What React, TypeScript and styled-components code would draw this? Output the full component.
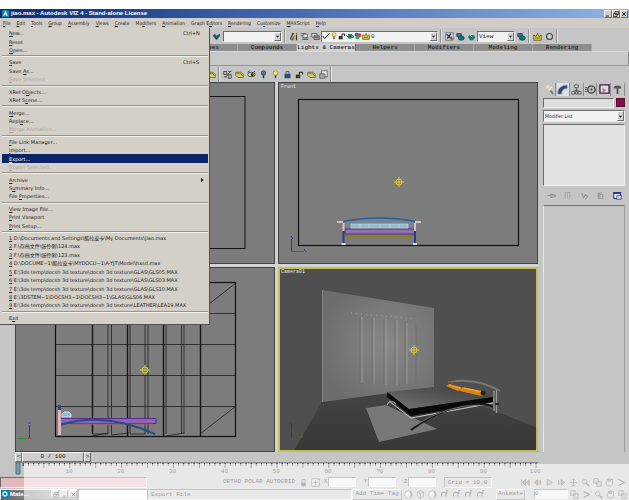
import React from "react";
import styled, { createGlobalStyle, css } from "styled-components";

const GlobalStyle = createGlobalStyle`
  * { box-sizing: border-box; }
  body { margin: 0; background: #fff; }
  button, input, select { font: inherit; color: inherit; margin: 0; padding: 0; border: 0; border-radius: 0; background: none; }
`;

const caption = `"Liberation Sans", sans-serif`;
const ui = `"DejaVu Sans Condensed", "Liberation Sans", sans-serif`;
const wide = `"DejaVu Sans", "Noto Sans CJK SC", sans-serif`;
const mono = `"Liberation Mono", monospace`;

const raised = css`
  border: 1px solid;
  border-color: #f4f4f4 #6c6c6c #6c6c6c #f4f4f4;
`;
const sunken = css`
  border: 1px solid;
  border-color: #6c6c6c #f0f0f0 #f0f0f0 #6c6c6c;
`;

const Page = styled.div`
  padding-top: 9px;
  font: 5px/8px ${ui};
  color: #1c1c1c;
`;
const Window = styled.main`
  position: relative;
  background: #c5c5c5;
`;
const TitleBar = styled.header`
  display: flex;
  align-items: center;
  gap: 2px;
  height: 9px;
  padding: 0 1px 0 2px;
  background: linear-gradient(90deg, #0b2a72, #4468ae 45%, #8fb4e6);
`;
const Title = styled.h1`
  flex: 1;
  margin: 0;
  font: bold 6px/9px ${caption};
  color: #fff;
`;
const WindowButtons = styled.div`
  display: flex;
`;
const WindowButton = styled.button`
  ${raised}
  display: grid;
  place-items: center;
  width: 8px;
  height: 8px;
  background: #d4d0c8;
`;
const MenuBar = styled.nav`
  display: flex;
  align-items: center;
  gap: 6px;
  height: 10px;
  padding-left: 3px;
  background: #d0cdc8;
`;
const MenuName = styled.button`
  white-space: nowrap;
  line-height: 10px;
`;
const Toolbar = styled.div<{ $start: number; $height: number }>`
  display: flex;
  align-items: center;
  height: ${(p) => p.$height}px;
  padding-left: ${(p) => p.$start}px;
`;
const ToolGroup = styled.div<{ $gap?: number }>`
  display: flex;
  align-items: center;
  gap: ${(p) => p.$gap ?? 2}px;
  height: 14px;
  padding: 0 2px 0 3px;
  border-right: 1px solid #909090;
  box-shadow: 1px 0 #e4e4e4;
`;
const ToolButton = styled.button<{ $on?: boolean }>`
  display: grid;
  place-items: center;
  width: 10px;
  height: 11px;
  flex: none;
  background: ${(p) => (p.$on ? "#dedede" : "none")};
`;
const ComboBox = styled.label<{ $width?: number; $height?: number }>`
  ${sunken}
  position: relative;
  display: flex;
  align-items: center;
  width: ${(p) => (p.$width ? `${p.$width}px` : "100%")};
  height: ${(p) => p.$height ?? 11}px;
  background: #f2f2f2;
`;
const ComboSelect = styled.select<{ $mono?: boolean }>`
  appearance: none;
  flex: 1;
  min-width: 0;
  height: 100%;
  padding: 0 8px 0 1px;
  outline: 0;
  font: ${(p) => (p.$mono ? `6px/9px ${mono}` : `5px/9px ${ui}`)};
`;
const ComboArrow = styled.span`
  ${raised}
  position: absolute;
  right: 0;
  top: 0;
  bottom: 0;
  width: 7px;
  display: grid;
  place-items: center;
  background: #d2d2d2;
  pointer-events: none;
`;
const TabStrip = styled.div`
  display: flex;
  height: 7px;
  padding-left: 179px;
`;
const Tab = styled.button<{ $active: boolean }>`
  flex: 0 0 59px;
  height: 7px;
  font: bold 6px/7px ${mono};
  white-space: nowrap;
  color: ${(p) => (p.$active ? "#3c3c3c" : "#303030")};
  background: ${(p) => (p.$active ? "#d2d2d2" : "#8e8e8e")};
  border-right: 1px solid ${(p) => (p.$active ? "#686868" : "#a6a6a6")};
`;
const TabPanel = styled.div`
  height: 15px;
  border: solid;
  border-width: 1px 1px 1px 0;
  border-color: #dadada #8a8a8a #969696;
  background: #c8c8c8;
`;
const Workspace = styled.div`
  display: grid;
  grid-template-columns: 15px minmax(0, 1fr) 91px;
`;
const Rail = styled.div`
  background: #c6c6c6;
`;
const Viewports = styled.div`
  display: grid;
  grid-template-columns: 1fr 1fr;
  gap: 3px;
  background: #d2d2d2;
`;
const View = styled.section`
  position: relative;
  background: #7c7c7c;
`;
const ViewLabel = styled.h2`
  position: absolute;
  left: 3px;
  top: 2px;
  margin: 0;
  font: 5px/6px ${mono};
  color: #e6e6e6;
`;
const Drawing = styled.svg`
  display: block;
  width: 100%;
  height: auto;
`;
const Ruler = styled(Drawing)`
  overflow: visible;
`;
const CommandPanel = styled.aside`
  display: flex;
  flex-direction: column;
  padding: 0 4px 0 5px;
  background: #c5c5c5;
`;
const PanelTabs = styled.div`
  display: flex;
  justify-content: space-between;
  height: 14px;
  align-items: center;
`;
const PanelTab = styled.button<{ $on?: boolean }>`
  display: grid;
  place-items: center;
  width: 13px;
  height: 13px;
  background: ${(p) => (p.$on ? "#e0e0e0" : "none")};
  border-right: 1px solid #8c8c8c;
`;
const NameRow = styled.div`
  display: flex;
  gap: 2px;
  height: 10px;
  margin: 2px 0;
`;
const NameInput = styled.input`
  ${sunken}
  flex: 1;
  min-width: 0;
  background: #dedede;
`;
const Swatch = styled.button`
  width: 9px;
  height: 9px;
  background: #850d48;
  border: 1px solid #5c0a35;
`;
const StackList = styled.div`
  ${sunken}
  height: 62px;
  margin: 2px 0;
  background: #e1e1e1;
`;
const StackTools = styled.div`
  display: flex;
  justify-content: space-between;
  align-items: center;
  height: 14px;
  padding: 0 3px;
`;
const Rollout = styled.div`
  flex: 1;
  margin-top: 3px;
  border: solid;
  border-width: 1px 1px 0;
  border-color: #6e6e6e #9a9a9a #9a9a9a #e6e6e6;
`;
const TimeSlider = styled.div`
  display: flex;
  height: 10px;
  padding-left: 15px;
`;
const SliderButton = styled.button<{ $wide?: boolean }>`
  ${raised}
  width: ${(p) => (p.$wide ? 62 : 7)}px;
  height: 10px;
  font: 6px/8px ${mono};
  background: #cdcdcd;
`;
const Footer = styled.footer`
  position: relative;
  color: #000;
`;
const Haze = styled.div`
  position: absolute;
  inset: 2px 0 0 24px;
  background: rgba(255, 255, 255, 0.6);
  pointer-events: none;
`;
const Track = styled.div`
  height: 14px;
  padding: 0 91px 0 15px;
`;
const StatusRow = styled.div`
  display: flex;
  align-items: center;
  height: 12px;
  font: 6px/10px ${mono};
  white-space: nowrap;
`;
const ScriptLine = styled.input<{ $tone: string; $width: number }>`
  ${sunken}
  flex: none;
  width: ${(p) => p.$width}px;
  height: 11px;
  background: ${(p) => p.$tone};
`;
const StatusText = styled.span<{ $width: number; $boxed?: boolean }>`
  flex: none;
  width: ${(p) => p.$width}px;
  height: 11px;
  padding-left: 3px;
  ${(p) => p.$boxed && sunken}
`;
const CoordLabel = styled.label`
  display: flex;
  align-items: center;
  gap: 1px;
  width: 40px;
`;
const CoordInput = styled.input<{ $width?: number }>`
  ${sunken}
  flex: none;
  width: ${(p) => p.$width ?? 28}px;
  height: 10px;
  background: #eee;
`;
const TextButton = styled.button<{ $width: number }>`
  ${raised}
  flex: none;
  width: ${(p) => p.$width}px;
  height: 11px;
  line-height: 8px;
`;
const TaskWindow = styled.div`
  ${raised}
  display: flex;
  align-items: center;
  gap: 1px;
  width: 78px;
  height: 11px;
  background: linear-gradient(90deg, #666, #bbb);
  color: #fff;
  font: bold 6px/9px ${caption};
`;
const TaskTitle = styled.span`
  flex: 1;
`;
const Spacer = styled.span<{ $grow?: number }>`
  flex: ${(p) => p.$grow ?? 1};
`;
const IconRun = styled.div<{ $gap?: number }>`
  display: flex;
  flex: none;
  gap: ${(p) => p.$gap ?? 2}px;
  padding: 0 2px 0 1px;
`;
const Menu = styled.ul`
  position: absolute;
  left: 0;
  top: 19px;
  z-index: 2;
  display: flex;
  flex-direction: column;
  width: 210px;
  min-height: 297px;
  margin: 0;
  padding: 1px 1px 2px 2px;
  list-style: none;
  background: #d4d0c8;
  font: 5px/8px ${wide};
  border: solid;
  border-width: 0 1px 1px 0;
  border-color: #55534f;
`;
const MenuLine = styled.li`
  flex: 1 0 8px;
  display: flex;
`;
const MenuItem = styled.button<{ $on?: boolean }>`
  display: flex;
  flex: 1;
  align-items: center;
  padding: 0 3px 0 7px;
  white-space: pre;
  text-align: left;
  line-height: 8px;
  background: ${(p) => (p.$on ? "#0a246a" : "none")};
  color: ${(p) => (p.$on ? "#fff" : "#1c1c1c")};
  &:disabled { color: #a9a59d; }
`;
const MenuLabel = styled.span`
  flex: 1;
`;
const Shortcut = styled.span`
  width: 22px;
`;
const Separator = styled.li`
  flex: none;
  height: 2px;
  margin: 1px 0;
  border-top: 1px solid #98948c;
  border-bottom: 1px solid #f0eee9;
`;

const icons: Record<string, React.ReactNode> = {
  pick: <><path d="M1 5l3-3 2 3 4-3 1 3-5 6z" fill="#236b78" /><path d="M3 5l3 4 3-4" stroke="#0c3440" fill="none" /></>,
  mirror: <><path d="M2 10L5 2l3 3M5 2h5v9M7 6L4 11" stroke="#333" fill="none" strokeWidth="1.5" /><circle cx="8" cy="3" r="2" fill="#e4d644" /><path d="M6 7h3v4H6z" fill="#c9b62b" /></>,
  align: <><path d="M1 2h7M1 5h7M3 8h8M3 10h8" stroke="#444" /><path d="M4 3h6v4H4z" fill="#eee" stroke="#555" /></>,
  layers: <><path d="M1 2h7v5H1z" fill="#ddd" stroke="#444" /><path d="M4 5h7v5H4z" fill="#aaa" stroke="#444" /><path d="M5 7h5" stroke="#333" /></>,
  check: <path d="M1 6l3 4 7-8" stroke="#222" fill="none" strokeWidth="1.5" />,
  bulb: <><circle cx="6" cy="4" r="3" fill="#f4ec68" stroke="#8c8420" /><path d="M5 7h2v4H5z" fill="#444" /></>,
  lock: <><path d="M1 6h6v5H1z" fill="#3c3a16" /><path d="M6 6V3h4v3" stroke="#222" fill="none" strokeWidth="1.5" /></>,
  teapot: <><ellipse cx="6" cy="7" rx="4" ry="3" fill="#198654" /><path d="M3 4h6M1 5l2 3M9 6q4-2 1 3" stroke="#155c57" fill="none" strokeWidth="1.5" /></>,
  balls: <><circle cx="4" cy="4" r="3" fill="#3155d2" /><circle cx="8" cy="5" r="3" fill="#d24141" /><circle cx="5" cy="8" r="3" fill="#32a75a" /></>,
  crown: <><path d="M1 4l3 2 2-4 2 4 3-2v7H1z" fill="#e0ce36" stroke="#504a19" /><path d="M3 8h6" stroke="#504a19" /></>,
  ring: <circle cx="6" cy="6" r="4" fill="#ccc" stroke="#444" strokeWidth="1.5" />,
  material: <><path d="M1 1h10v10H1z" fill="#ddd" stroke="#666" /><path d="M2 3l8 7M8 2L3 9" stroke="#27416e" strokeWidth="2" /><circle cx="8" cy="8" r="2" fill="#b44" /></>,
  render: <><path d="M1 2h6v4H1z" fill="#4671b4" stroke="#143860" /><ellipse cx="7" cy="8" rx="4" ry="3" fill="#17746b" stroke="#0d4440" /></>,
  quick: <><path d="M1 6l3-2h5l2 3-3 4H4z" fill="#187a70" /><path d="M4 4l3 3" stroke="#dff" /></>,
  stack: <><path d="M1 3h7l3 3v4H4L1 7z" fill="#dbd76c" stroke="#585520" /><path d="M2 5h6l2 3" stroke="#585520" fill="none" /></>,
  eye: <><ellipse cx="6" cy="6" rx="5" ry="3" fill="#eee58a" stroke="#222" /><circle cx="7" cy="6" r="2" fill="#222" /><path d="M1 3l3-2M9 2h2" stroke="#222" /></>,
  hide: <><path d="M1 2h4v4H1zM7 6h4v5H7z" fill="#bbb" stroke="#333" /><path d="M3 10l7-8M7 2h4M1 9h4" stroke="#333" /></>,
  bluebulb: <><circle cx="6" cy="4" r="3" fill="#55799e" stroke="#243c60" /><path d="M5 7h2v4H5z" fill="#333" /></>,
  bluelock: <><path d="M2 5h8v6H2z" fill="#294c80" /><path d="M4 5V2h4v3" stroke="#294c80" fill="none" /></>,
  graylock: <><path d="M3 6h6v5H3z" fill="#444" /><path d="M4 6V2h4v4" stroke="#444" fill="none" /></>,
  absolute: <><path d="M1 1h10v10H1z" fill="#ddd" stroke="#444" /><path d="M6 3v6M3 6h6" stroke="#333" /></>,
  sheet: <><path d="M3 1h8v8H3z" fill="#eee" stroke="#555" /><path d="M1 5h7v6H1z" fill="#aaa" stroke="#555" /></>,
  create: <><path d="M3 2l7 8M2 5l3-4M5 7l4-4" stroke="#eee8ba" strokeWidth="1.5" /><path d="M7 7l3 4" stroke="#777" strokeWidth="2" /></>,
  modify: <path d="M1 11V8q1-6 10-7v4Q5 5 5 11z" fill="#33456d" stroke="#8194bd" />,
  tree: <><path d="M6 3v3L2 9M6 6l4 3M6 6v4" stroke="#555" fill="none" /><path d="M4 1h4v3H4zM1 8h3v3H1zM5 8h2v3H5zM8 8h3v3H8z" fill="#ddd" stroke="#555" /></>,
  motion: <><circle cx="7" cy="6" r="4" fill="#bbb" stroke="#444" strokeWidth="1.5" /><circle cx="7" cy="6" r="1" fill="#333" /><path d="M0 4h3M0 6h2M0 8h3" stroke="#555" /></>,
  display: <><path d="M1 1h10v9H1z" fill="#ddd" stroke="#40233d" strokeWidth="1.5" /><path d="M4 4l4 3-4 2z" fill="#c06b8e" /></>,
  hammer: <><path d="M2 3q4-3 8 0v2H2z" fill="#545454" /><path d="M6 4v7" stroke="#545454" strokeWidth="2" /></>,
  pin: <path d="M1 6h4V4l3 1h3v3H8l-3 1V7" fill="#b2b2b2" stroke="#888" />,
  result: <path d="M3 2v8M6 2v8M9 2v8M2 2h8" stroke="#a0a0a0" fill="none" />,
  unique: <path d="M2 3l3 6 2-4 3 2-3 4" stroke="#939393" fill="none" strokeWidth="1.5" />,
  remove: <path d="M3 5h6v5H3zM2 4l6-2M5 6v3" stroke="#989898" fill="none" strokeWidth="1.5" />,
  config: <><path d="M1 2h9v8H1z" fill="#eee" stroke="#283890" strokeWidth="1.5" /><path d="M1 2h9v2H1z" fill="#283890" /><path d="M5 6h6v5H5z" fill="#d8dcf0" stroke="#283890" /></>,
  start: <path d="M1 2v8M6 2L2 6l4 4zM11 2L7 6l4 4z" stroke="#444" fill="#777" />,
  prev: <path d="M6 2L2 6l4 4zM8 3v6M10 3v6" stroke="#444" fill="#777" />,
  play: <path d="M3 2l7 4-7 4z" stroke="#444" fill="#aaa" />,
  next: <path d="M2 3v6M4 3v6M6 2l4 4-4 4z" stroke="#444" fill="#777" />,
  move: <path d="M6 1v10M1 6h10M4 3l2-2 2 2M4 9l2 2 2-2" stroke="#444" fill="none" />,
  zoom: <><circle cx="5" cy="5" r="3" stroke="#444" fill="none" /><path d="M7 7l4 4" stroke="#444" strokeWidth="2" /></>,
  extents: <path d="M1 1h6v6H1zM5 5h6v6H5z" stroke="#444" fill="#bbb" />,
  fov: <path d="M2 2l8 4-8 4" stroke="#444" fill="none" strokeWidth="1.5" />,
  hand: <path d="M3 10L1 6l2-1V2h2v3V1h2v4l1-3h2v7l-2 2z" stroke="#444" fill="#ccc" />,
  snap: <path d="M2 9V6q0-3 3-3t3 3v3M8 1h3M9 2v3" stroke="#444" fill="none" strokeWidth="1.5" />,
  cube: <path d="M2 3l4-2 4 2v6l-4 2-4-2zM2 3l4 2 4-2M6 5v6" stroke="#444" fill="#ddd" />,
  sphere: <><circle cx="6" cy="6" r="5" fill="#eee" stroke="#555" /><path d="M7 2a4 4 0 010 8q3-4 0-8" fill="#666" /></>,
  app: <><path d="M0 0h12v12H0z" fill="#1689aa" /><path d="M2 10L6 1l4 9H7L6 7l-2 3z" fill="#d8f8ff" /></>,
  task: <><path d="M0 0h12v12H0z" fill="#087ab0" /><circle cx="6" cy="6" r="3" fill="none" stroke="#d5f7ff" strokeWidth="2" /></>,
  min: <path d="M2 9h6v2H2z" fill="#222" />,
  restore: <path d="M4 1h7v6H4zM1 5h7v6H1z" fill="#d4d0c8" stroke="#222" strokeWidth="1.5" />,
  close: <path d="M2 2l8 8M10 2l-8 8" stroke="#222" strokeWidth="2" />,
  down: <path d="M2 4h8L6 9z" fill="#111" />,
  right: <path d="M4 2l5 4-5 4z" fill="#111" />,
};

const Icon = ({ name, size = 9 }: { name: string; size?: number }) => (
  <svg width={size} height={size} viewBox="0 0 12 12" aria-hidden="true">{icons[name]}</svg>
);
const Tool = ({ name, on }: { name: string; on?: boolean }) => (
  <ToolButton aria-label={name} $on={on}><Icon name={name} /></ToolButton>
);
const Combo = ({ label, value, width, height, fixed, children }: {
  label: string; value: string; width?: number; height?: number; fixed?: boolean; children?: React.ReactNode;
}) => (
  <ComboBox $width={width} $height={height}>
    {children}
    <ComboSelect aria-label={label} $mono={fixed}><option>{value}</option></ComboSelect>
    <ComboArrow><Icon name="down" size={5} /></ComboArrow>
  </ComboBox>
);

const menuNames = ["File", "Edit", "Tools", "Group", "Assembly", "Views", "Create", "Modifiers", "Animation", "Graph Editors", "Rendering", "Customize", "MAXScript", "Help"];
const accessAt: Record<string, number> = { Modifiers: 2, "Graph Editors": 7, Customize: 2 };

const Access = ({ text, at = 0 }: { text: string; at?: number }) => (
  <>{text.slice(0, at)}<u>{text[at]}</u>{text.slice(at + 1)}</>
);

type Entry = { text: string; at?: number; keys?: string; off?: boolean; on?: boolean; sub?: boolean };
const fileMenu: Entry[][] = [
  [{ text: "New...", keys: "Ctrl+N" }, { text: "Reset" }, { text: "Open..." }],
  [{ text: "Save", keys: "Ctrl+S" }, { text: "Save As...", at: 5 }, { text: "Save Selected", off: true }],
  [{ text: "XRef Objects...", at: 6 }, { text: "XRef Scene...", at: 6 }],
  [{ text: "Merge..." }, { text: "Replace...", at: 4 }, { text: "Merge Animation...", off: true }],
  [{ text: "File Link Manager..." }, { text: "Import..." }, { text: "Export...", on: true }, { text: "Export Selected...", off: true }],
  [{ text: "Archive", sub: true }, { text: "Summary Info...", at: 1 }, { text: "File Properties...", at: 5 }],
  [{ text: "View Image File..." }, { text: "Print Viewport" }, { text: "Print Setup..." }],
  [
    "1 D:\\Documents and Settings\\酷拉皮卡\\My Documents\\jiao.max",
    "2 F:\\存档文件\\张伶俐\\124.max",
    "3 F:\\存档文件\\张伶俐\\123.max",
    "4 D:\\DOCUME~1\\酷拉皮卡\\MYDOCU~1\\A-YJT\\Model\\hxsd.max",
    "5 E:\\3ds temp\\docsh 3d texture\\docsh 3d texture\\GLAS\\GLS05.MAX",
    "6 E:\\3ds temp\\docsh 3d texture\\docsh 3d texture\\GLAS\\GLS03.MAX",
    "7 E:\\3ds temp\\docsh 3d texture\\docsh 3d texture\\GLAS\\GLS10.MAX",
    "8 E:\\3DSTEM~1\\DOCSH3~1\\DOCSH3~1\\GLAS\\GLS06.MAX",
    "9 E:\\3ds temp\\docsh 3d texture\\docsh 3d texture\\LEATHER\\LEA19.MAX",
  ].map((text) => ({ text })),
  [{ text: "Exit", at: 1 }],
];

const FileMenu = () => (
  <Menu>
    {fileMenu.map((group, g) => (
      <React.Fragment key={g}>
        {g > 0 && <Separator role="separator" />}
        {group.map((item) => (
          <MenuLine key={item.text}>
            <MenuItem disabled={item.off} $on={item.on}>
              <MenuLabel><Access text={item.text} at={item.at} /></MenuLabel>
              {item.keys && <Shortcut>{item.keys}</Shortcut>}
              {item.sub && <Icon name="right" size={6} />}
            </MenuItem>
          </MenuLine>
        ))}
      </React.Fragment>
    ))}
  </Menu>
);

const Target = ({ x, y }: { x: number; y: number }) => (
  <g stroke="#d6cb32" fill="none">
    <path d={`M${x - 5} ${y}h10M${x} ${y - 5}v10`} />
    <circle cx={x} cy={y} r="3" />
  </g>
);
const Frame = ({ x, y, w, h }: { x: number; y: number; w: number; h: number }) => (
  <rect x={x + 0.5} y={y + 0.5} width={w - 1} height={h - 1} fill="none" stroke="#3f4445" />
);

const TopView = () => (
  <View>
    <Drawing viewBox="15 82 260 182">
      <Frame x={15} y={82} w={260} h={182} />
      <rect x="56" y="96.5" width="189" height="152" fill="none" stroke="#151515" />
    </Drawing>
  </View>
);

const FrontView = () => (
  <View>
    <Drawing viewBox="278 82 260 182">
      <Frame x={278} y={82} w={260} h={182} />
      <rect x="298.5" y="99.5" width="220" height="146" fill="none" stroke="#111" strokeWidth="1.2" />
      <Target x={399} y={182} />
      <path d="M343 222q37-7 73 0v8h-73z" fill="#75858e" />
      <path d="M345 229h70v5h-70z" fill="#9170ac" stroke="#4e2c93" />
      <path d="M344 236.500h71" stroke="#858016" strokeWidth="2" />
      <path d="M351 224h57v4h-57zM360 224v4M369 224v4M380 224v4M390 224v4M399 224v4" fill="#96bccb" stroke="#b8d7dc" strokeWidth=".7" />
      <path d="M341 222q38-8 77 0" stroke="#245fa8" fill="none" strokeWidth="1.6" />
      <path d="M337 222h6M415 222h6M343.500 223v8M415 223v8" stroke="#e0b9c9" strokeWidth="2" />
      <path d="M343.500 231v12M415 231v12" stroke="#283d98" strokeWidth="2" />
      <path d="M341.500 244h4M413 244h4" stroke="#ddd" strokeWidth="2" />
      <path d="M291.500 251v-12" stroke="#303790" /><path d="M291 251.500h13" stroke="#8d4258" /><path d="M291 236l2 3M304 249l2 3" stroke="#423a80" />
    </Drawing>
    <ViewLabel>Front</ViewLabel>
  </View>
);

const SideView = () => (
  <View>
    <Drawing viewBox="15 267 260 185">
      <Frame x={15} y={267} w={260} h={185} />
      <g fill="none" stroke="#202020" strokeWidth=".8">
        <path d="M56 313.500h180M56 344.500h180M56 375.500h180M56 406.500h180" />
        <path d="M108 283v151M111.500 283v151M130 283v151M145 283v151M148 283v151M166 283v151M181.500 283v151M184 283v151" />
        <path d="M200 434l36-28M200 311l36-28M93 434h15M111 435l18-2M130 434h15M166 436l18-3M92 436l16-3" />
      </g>
      <path d="M92.500 283v151M127.500 283v153M163.500 283v153M200.500 283v153" stroke="#151515" strokeWidth="1.4" />
      <rect x="55.500" y="282.500" width="180" height="154" fill="none" stroke="#111" strokeWidth="1.2" />
      <path d="M60 418.500h96v5H60z" fill="#8d64b8" stroke="#5a288f" />
      <path d="M60 424h93" stroke="#b35564" strokeWidth=".8" />
      <path d="M60 425q45-14 95 9" fill="none" stroke="#204f84" strokeWidth="2" />
      <path d="M59.500 409v26" stroke="#dfb5bd" strokeWidth="3" /><path d="M59.500 405v5" stroke="#3042a4" strokeWidth="3" />
      <path d="M62 417v-3l2-2h5l2 2v3z" fill="#8fbdd0" stroke="#c2e2e8" />
      <Target x={145} y={370} />
      <path d="M29.500 438v-13" stroke="#33379a" /><path d="M17 438.500h12" stroke="#368a41" /><path d="M28 437h3v2h-3z" fill="#a34343" /><path d="M28 423h3" stroke="#33379a" />
    </Drawing>
  </View>
);

const CameraView = () => (
  <View>
    <Drawing viewBox="278 267 260 185">
      <defs>
        <radialGradient id="wallLight" cx=".6" cy=".48" r=".62"><stop stopColor="#888" /><stop offset="1" stopColor="#6d6d6d" /></radialGradient>
        <linearGradient id="floorLight" x1="0" y1="0" x2="0" y2="1"><stop stopColor="#454545" /><stop offset="1" stopColor="#373737" /></linearGradient>
        <linearGradient id="mattress" x1="0" y1="1" x2="1" y2="0"><stop stopColor="#777" /><stop offset=".6" stopColor="#505050" /><stop offset="1" stopColor="#3e3e3e" /></linearGradient>
      </defs>
      <path d="M278 267h260v185H278z" fill="#4f4f4f" />
      <path d="M293 452l29-50 112-15 104 41v24z" fill="url(#floorLight)" />
      <path d="M322 290l112 18v79l-112 15z" fill="url(#wallLight)" />
      <path d="M322.500 290v112" stroke="#858585" />
      <g stroke="#9a9a9a"><path d="M362 317v66M374 318v66M386 319v66M397 320v65M407 323v61" /></g>
      <path d="M360 318v66M372 319v64M384 320v64M395 321v62M405 322v62M416 325v57" stroke="#707070" />
      <path d="M351 313l65 6" stroke="#a2a2a2" strokeDasharray="1 4" />
      <path d="M366 408l20-3 51 24-58 13z" fill="#787878" />
      <path d="M387 392l60-6 46 11-84 12z" fill="url(#mattress)" />
      <path d="M387 392l22 17 84-12v5l-82 14-24-19z" fill="#080808" />
      <path d="M389 401l22 17 82-15" fill="none" stroke="#ccc" />
      <path d="M387 404q5-5 9 0M390 401l-3 4" fill="none" stroke="#a2a2a2" />
      <path d="M411 430q34-25 68-26 10 0 14 3" stroke="#171717" fill="none" strokeWidth="2" />
      <path d="M416 425q31-20 64-20" stroke="#909090" fill="none" strokeWidth=".7" />
      <path d="M448 382q28-5 52 9" stroke="#777" fill="none" strokeWidth="2" />
      <path d="M496.500 390v23M494 391v20" stroke="#999" strokeWidth="1.3" /><path d="M495 404h4" stroke="#222" strokeWidth="2" />
      <path d="M446 386l3-2 12 3v3l-3 1zM462 387l21 4q4 2 1 4l-3 1-21-5z" fill="#d98218" />
      <path d="M449 385l11 3M464 388l17 4" stroke="#f6a837" /><circle cx="483" cy="393" r="2.500" fill="#252015" />
      <path d="M449 381l7-1M447 383h4" stroke="#704715" />
      <Target x={414} y={350} />
      <path d="M291.500 438v-13M290 423l3 3" stroke="#36367d" /><path d="M298 437h5" stroke="#317543" /><path d="M297 435v3" stroke="#833" />
      <rect x="279" y="268" width="258" height="183" fill="none" stroke="#dddc55" strokeWidth="1.6" />
    </Drawing>
    <ViewLabel>Camera01</ViewLabel>
  </View>
);

const TrackRuler = () => (
  <Ruler viewBox="15 462 523 14">
    <path d="M15 462.500h523" stroke="#8b8b8b" />
    {Array.from({ length: 101 }, (_, i) => (
      <path key={i} d={`M${18 + i * 5.18} 463v${i % 5 ? 3 : 5}`} stroke="#222" />
    ))}
    {Array.from({ length: 10 }, (_, i) => (
      <text key={i} x={69 + i * 51.8} y="473" textAnchor="middle" fontFamily="Liberation Mono, monospace" fontSize="6" fill="#111">{(i + 1) * 10}</text>
    ))}
    <path d="M16 463h4v11h-4z" fill="#789ab2" stroke="#4f6c83" />
  </Ruler>
);

const App = () => (
  <Page>
    <GlobalStyle />
    <Window>
      <TitleBar>
        <Icon name="app" size={7} />
        <Title>jiao.max - Autodesk VIZ 4 - Stand-alone License</Title>
        <WindowButtons>
          {["min", "restore", "close"].map((n) => <WindowButton key={n} aria-label={n}><Icon name={n} size={6} /></WindowButton>)}
        </WindowButtons>
      </TitleBar>
      <MenuBar>
        {menuNames.map((n) => <MenuName key={n}><Access text={n} at={accessAt[n]} /></MenuName>)}
      </MenuBar>
      <FileMenu />
      <Toolbar $start={208} $height={16}>
        <ToolGroup>
          <Tool name="pick" />
          <Combo label="Named selection" value="" width={59} />
        </ToolGroup>
        <ToolGroup $gap={1}>
          <Tool name="mirror" /><Tool name="align" /><Tool name="layers" />
          <Combo label="Layer" value="0" width={117} fixed>
            {["check", "bulb", "lock", "teapot", "balls", "crown"].map((n) => <Icon key={n} name={n} size={8} />)}
          </Combo>
        </ToolGroup>
        <ToolGroup $gap={1}>
          <Tool name="material" /><Tool name="render" /><Tool name="quick" />
          <Combo label="Render type" value="View" width={38} fixed />
          <Tool name="render" />
        </ToolGroup>
        <ToolGroup><Tool name="crown" /><Tool name="ring" /></ToolGroup>
      </Toolbar>
      <TabStrip role="tablist">
        {["Shapes", "Compounds", "Lights & Cameras", "Helpers", "Modifiers", "Modeling", "Rendering"].map((t) => (
          <Tab key={t} role="tab" aria-selected={t === "Lights & Cameras"} $active={t === "Lights & Cameras"}>{t}</Tab>
        ))}
      </TabStrip>
      <TabPanel role="tabpanel" />
      <Toolbar $start={203} $height={16}>
        <ToolGroup><Tool name="stack" /></ToolGroup>
        <ToolGroup>
          {["hide", "stack", "eye", "bluebulb", "bulb", "bluelock", "lock", "stack", "sheet"].map((n, i) => <Tool key={i} name={n} />)}
        </ToolGroup>
      </Toolbar>
      <Workspace>
        <Rail />
        <Viewports><TopView /><FrontView /><SideView /><CameraView /></Viewports>
        <CommandPanel>
          <PanelTabs>
            {["create", "modify", "tree", "motion", "display", "hammer"].map((n) => (
              <PanelTab key={n} aria-label={n} $on={n === "modify"}><Icon name={n} size={11} /></PanelTab>
            ))}
          </PanelTabs>
          <NameRow><NameInput aria-label="Object name" /><Swatch aria-label="Object colour" /></NameRow>
          <Combo label="Modifier" value="Modifier List" height={12} />
          <StackList />
          <StackTools>
            {["pin", "result", "unique", "remove", "config"].map((n) => <Tool key={n} name={n} />)}
          </StackTools>
          <Rollout />
        </CommandPanel>
      </Workspace>
      <TimeSlider>
        <SliderButton aria-label="Previous frame">&lt;</SliderButton>
        <SliderButton $wide>0 / 100</SliderButton>
        <SliderButton aria-label="Next frame">&gt;</SliderButton>
      </TimeSlider>
      <Footer>
        <Track><TrackRuler /></Track>
        <StatusRow>
          <ScriptLine aria-label="Macro recorder" $tone="#e2b8bd" $width={147} />
          <StatusText $width={73} />
          <StatusText $width={78}>ORTHO POLAR AUTOGRID</StatusText>
          <Tool name="graylock" /><Spacer /><Tool name="absolute" /><Spacer />
          {["X", "Y", "Z"].map((n) => <CoordLabel key={n}>{n}<CoordInput /></CoordLabel>)}
          <StatusText $width={48} $boxed>Grid = 10.0</StatusText>
          <Spacer $grow={10} />
          <IconRun>
            {["start", "prev", "play", "next", "move", "zoom", "extents", "hand", "fov"].map((n) => <Tool key={n} name={n} />)}
          </IconRun>
        </StatusRow>
        <StatusRow>
          <TaskWindow>
            <Icon name="task" size={8} /><TaskTitle>Mate...</TaskTitle>
            {["restore", "min", "close"].map((n) => <WindowButton key={n} aria-label={n}><Icon name={n} size={5} /></WindowButton>)}
          </TaskWindow>
          <ScriptLine aria-label="Script listener" $tone="#fff" $width={69} />
          <StatusText $width={205} $boxed>Export File</StatusText>
          <TextButton $width={50}>Add Time Tag</TextButton>
          <IconRun>{["sphere", "cube", "sphere", "snap", "snap", "snap", "snap"].map((n, i) => <Tool key={i} name={n} />)}</IconRun>
          <Spacer />
          <TextButton $width={29}>Animate</TextButton>
          <Spacer />
          <CoordInput aria-label="Current frame" defaultValue="0" $width={34} />
          <IconRun>{["extents", "fov", "zoom", "hand", "extents"].map((n, i) => <Tool key={i} name={n} />)}</IconRun>
        </StatusRow>
        <Haze />
      </Footer>
    </Window>
  </Page>
);

export default App;
